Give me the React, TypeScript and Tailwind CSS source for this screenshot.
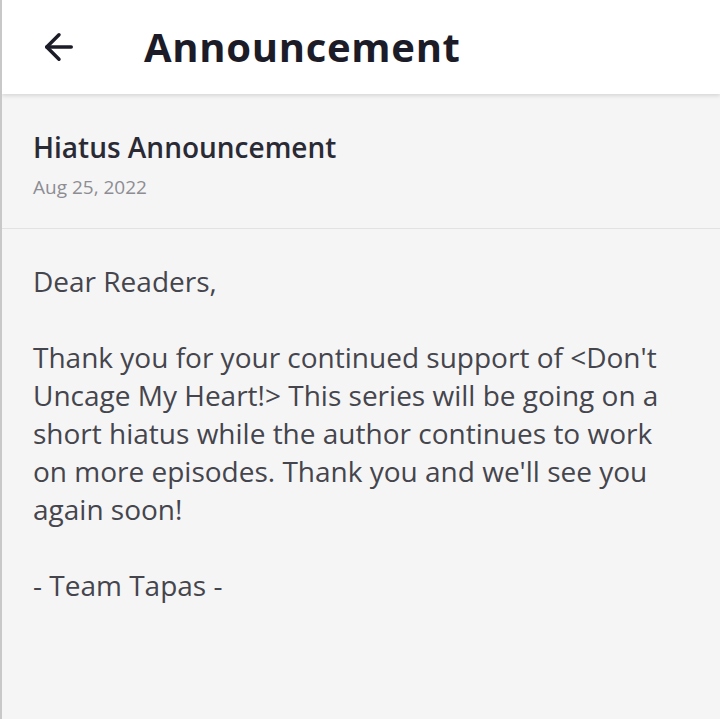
import { ArrowLeft } from "lucide-react";

export default function App() {
  return (
    <div className="h-[719px] w-[720px] overflow-hidden border-l-2 border-[#c8c8c8] bg-[#f5f5f5] font-['Open_Sans',sans-serif]">
      <header className="relative z-10 flex h-[94px] items-center bg-white pl-[36px] shadow-[0_2px_4px_rgba(0,0,0,0.12)]">
        <ArrowLeft className="h-[42px] w-[42px] text-[#1c1c28]" strokeWidth={2} />
        <h1 className="ml-[64px] text-[40px] font-bold tracking-[0.7px] text-[#1c1c28]">Announcement</h1>
      </header>

      <section className="border-b border-[#e2e2e2] px-[31px] pb-[28px] pt-[35px]">
        <h2 className="text-[28px] font-semibold leading-[36px] text-[#2a2a35]">Hiatus Announcement</h2>
        <p className="mt-[9px] text-[19px] leading-[26px] text-[#8d8d93]">Aug 25, 2022</p>
      </section>

      <article className="px-[31px] pt-[33px] text-[28px] leading-[38px] text-[#45454d]">
        <p>Dear Readers,</p>
        <p className="mt-[38px]">
          Thank you for your continued support of &lt;Don't Uncage My Heart!&gt; This series will be going on a short
          hiatus while the author continues to work on more episodes. Thank you and we'll see you again soon!
        </p>
        <p className="mt-[38px]">- Team Tapas -</p>
      </article>
    </div>
  );
}
